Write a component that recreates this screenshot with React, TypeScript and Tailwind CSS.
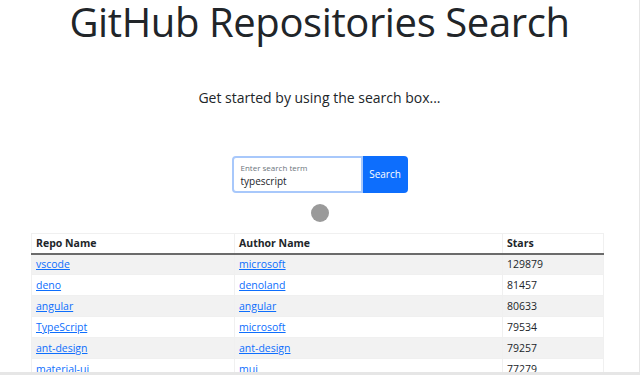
import React from 'react'

const repos = [
  { name: 'vscode', author: 'microsoft', stars: 129879 },
  { name: 'deno', author: 'denoland', stars: 81457 },
  { name: 'angular', author: 'angular', stars: 80633 },
  { name: 'TypeScript', author: 'microsoft', stars: 79534 },
  { name: 'ant-design', author: 'ant-design', stars: 79257 },
  { name: 'material-ui', author: 'mui', stars: 77279 },
]

export default function App() {
  return (
    <div
      className="w-[640px] h-[375px] overflow-hidden bg-white text-[#212529] border-r border-b-[3px] border-[#e6e6e6] flex flex-col items-center"
      style={{ fontFamily: "'Open Sans', 'Noto Sans', sans-serif" }}
    >
      <h1 className="shrink-0 text-[40px] leading-[44px] font-normal tracking-[-0.4px] whitespace-nowrap">GitHub Repositories Search</h1>

      <p className="shrink-0 mt-[42px] text-[14px] leading-6">Get started by using the search box...</p>

      <div className="shrink-0 mt-[46px] flex">
        <div className="w-[131px] h-[37px] border-2 border-[#a8c8fb] rounded-l-[4px] px-[7px] pt-[4px] flex flex-col">
          <span className="text-[8px] leading-[12px] text-[#6c757d]">Enter search term</span>
          <span className="text-[10px] leading-[14px]">typescript</span>
        </div>
        <button className="w-[45px] h-[37px] bg-[#0d6efd] text-white text-[10px] rounded-r-[4px]">Search</button>
      </div>

      <div className="shrink-0 mt-[11px] w-[18px] h-[18px] rounded-full bg-[#9a9a9a]" />

      <table className="shrink-0 mt-[11px] ml-[-4px] w-[572px] border-collapse text-[10.5px] leading-[14px] table-fixed">
        <colgroup>
          <col className="w-[203px]" />
          <col className="w-[268px]" />
          <col className="w-[101px]" />
        </colgroup>
        <thead>
          <tr className="border-t border-[#f0f0f0]">
            <th className="text-left font-bold px-[4px] h-[20px] border-x border-[#f0f0f0] border-b-2 border-b-[#6b6b6b]">Repo Name</th>
            <th className="text-left font-bold px-[4px] h-[20px] border-x border-[#f0f0f0] border-b-2 border-b-[#6b6b6b]">Author Name</th>
            <th className="text-left font-bold px-[4px] h-[20px] border-x border-[#f0f0f0] border-b-2 border-b-[#6b6b6b]">Stars</th>
          </tr>
        </thead>
        <tbody>
          {repos.map((r, i) => (
            <tr key={r.name} className={i % 2 === 0 ? 'bg-[#f2f2f2]' : 'bg-white'}>
              <td className="px-[4px] h-[21px] border border-[#f0f0f0]">
                <a href="#" className="text-[#0d6efd] underline">{r.name}</a>
              </td>
              <td className="px-[4px] h-[21px] border border-[#f0f0f0]">
                <a href="#" className="text-[#0d6efd] underline">{r.author}</a>
              </td>
              <td className="px-[4px] h-[21px] border border-[#f0f0f0]">{r.stars}</td>
            </tr>
          ))}
        </tbody>
      </table>
    </div>
  )
}
